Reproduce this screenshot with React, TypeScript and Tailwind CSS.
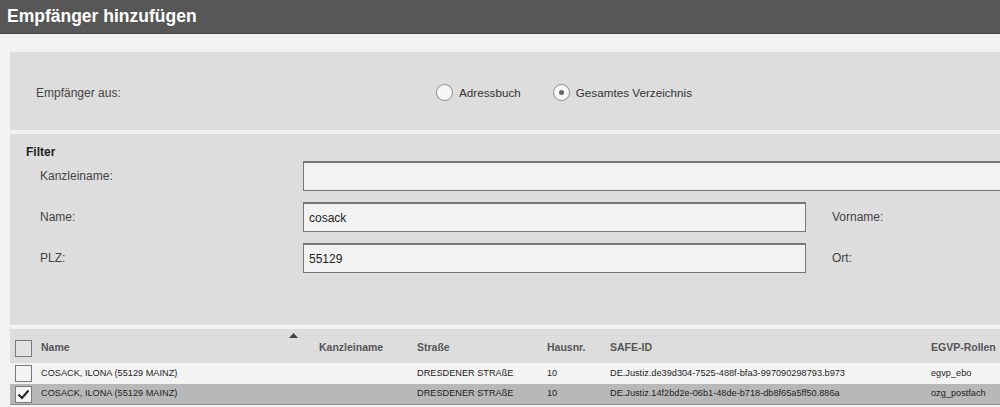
import React from "react";

function Radio({ checked, label }: { checked?: boolean; label: string }) {
  return (
    <label className="flex items-center gap-[6px]">
      <span className="w-[17px] h-[17px] rounded-full border border-[#8a8a8a] bg-[#f6f6f6] flex items-center justify-center">
        {checked && <span className="w-[5px] h-[5px] rounded-full bg-[#666]" />}
      </span>
      <span className="text-[11.7px] text-[#333]">{label}</span>
    </label>
  );
}

function Box({ checked, header }: { checked?: boolean; header?: boolean }) {
  return (
    <span
      className={
        "w-[17px] h-[17px] border border-[#7a7a7a] flex items-center justify-center " +
        (header ? "bg-[#e2e2e2]" : "bg-[#f4f4f4]")
      }
    >
      {checked && (
        <svg width="13" height="11" viewBox="0 0 13 11">
          <path d="M1.5 5.5 L5 9 L11.5 1.5" fill="none" stroke="#222" strokeWidth="2" />
        </svg>
      )}
    </span>
  );
}

const cols = "grid grid-cols-[31px_278px_98px_130px_63px_321px_1fr]";

function Row({ checked, safe, role }: { checked?: boolean; safe: string; role: string }) {
  return (
    <div
      className={
        cols +
        " items-center text-[9.2px] text-[#1e1e1e] " +
        (checked ? "h-[21px] bg-[#b8b8b8] border-b border-[#8c8c8c]" : "h-[21px] bg-[#f3f3f3]")
      }
    >
      <div className="pl-[5px] flex items-center">
        <Box checked={checked} />
      </div>
      <div>COSACK, ILONA (55129 MAINZ)</div>
      <div></div>
      <div>DRESDENER STRAßE</div>
      <div>10</div>
      <div>{safe}</div>
      <div>{role}</div>
    </div>
  );
}

export default function App() {
  return (
    <div className="w-[1000px] h-[407px] overflow-hidden bg-[#f2f2f2] font-['Liberation_Sans',Arial,sans-serif] flex flex-col">
      <div className="h-[34px] shrink-0 bg-[#575757] border-b border-[#444] flex items-center pl-[7px]">
        <h1 className="text-[17.5px] font-bold text-white leading-none">Empfänger hinzufügen</h1>
      </div>
      <div className="pl-[10px] pt-[18px] flex flex-col gap-[4px]">
        <div className="h-[78px] bg-[#dddddd] flex items-center pt-[4px]">
          <div className="w-[426px] shrink-0 pl-[26px] text-[12px] text-[#444]">Empfänger aus:</div>
          <div className="flex items-center gap-[32px]">
            <Radio label="Adressbuch" />
            <Radio checked label="Gesamtes Verzeichnis" />
          </div>
        </div>
        <div className="h-[191px] bg-[#dddddd] pt-[11px] flex flex-col overflow-hidden">
          <div className="pl-[16px] text-[12px] font-bold text-[#222] leading-[14px]">Filter</div>
          <div className="flex flex-col gap-[11px] mt-[2px] text-[12px] text-[#444]">
            <div className="flex items-center">
              <div className="w-[293px] shrink-0 pl-[30px]">Kanzleiname:</div>
              <div className="w-[800px] shrink-0 h-[30px] bg-[#f2f2f2] border border-[#777] border-t-2"></div>
            </div>
            <div className="flex items-center">
              <div className="w-[293px] shrink-0 pl-[30px]">Name:</div>
              <div className="w-[503px] shrink-0 h-[30px] bg-[#f2f2f2] border border-[#777] border-t-2 flex items-center pl-[5px] text-[#222]">
                cosack
              </div>
              <div className="pl-[26px]">Vorname:</div>
            </div>
            <div className="flex items-center">
              <div className="w-[293px] shrink-0 pl-[30px]">PLZ:</div>
              <div className="w-[503px] shrink-0 h-[30px] bg-[#f2f2f2] border border-[#777] border-t-2 flex items-center pl-[5px] text-[#222]">
                55129
              </div>
              <div className="pl-[26px]">Ort:</div>
            </div>
          </div>
        </div>
        <div className="flex flex-col">
          <div className={cols + " h-[34px] bg-[#dddddd] items-center pt-[4px] text-[10.5px] font-bold text-[#555]"}>
            <div className="pl-[5px] flex items-center">
              <Box header />
            </div>
            <div className="relative flex items-center">
              Name
              <svg className="absolute left-[248px] top-[-7px]" width="9" height="5" viewBox="0 0 9 5">
                <path d="M0 5 L4.5 0 L9 5 Z" fill="#444" />
              </svg>
            </div>
            <div>Kanzleiname</div>
            <div>Straße</div>
            <div>Hausnr.</div>
            <div>SAFE-ID</div>
            <div>EGVP-Rollen</div>
          </div>
          <Row safe="DE.Justiz.de39d304-7525-488f-bfa3-997090298793.b973" role="egvp_ebo" />
          <Row checked safe="DE.Justiz.14f2bd2e-06b1-48de-b718-db8f65a5ff50.886a" role="ozg_postfach" />
        </div>
      </div>
    </div>
  );
}
